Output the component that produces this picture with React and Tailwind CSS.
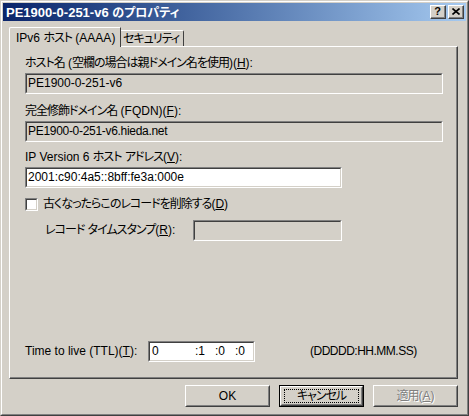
import React from 'react';

const FONT = "font-['Liberation_Sans','Noto_Sans_CJK_JP',sans-serif] [font-feature-settings:'palt']";

// Japanese runs are drawn a bit tighter, like MS UI Gothic
const J = ({ children }) => <span className="tracking-[-1px]">{children}</span>;

// sunken edit box, classic 3D look
const Field = ({ className = '', white = false, children }) => (
  <div className={`border border-t-[#808080] border-l-[#808080] border-r-white border-b-white ${className}`}>
    <div
      className={`h-full border border-t-[#404040] border-l-[#404040] border-r-[#d4d0c8] border-b-[#d4d0c8] pl-[1px] leading-[17px] whitespace-nowrap ${
        white ? 'bg-white' : 'bg-[#d4d0c8]'
      }`}
    >
      {children}
    </div>
  </div>
);

const U = ({ children }) => <span className="underline underline-offset-[1px]">{children}</span>;

const Button = ({ children, isDefault = false, disabled = false }) => (
  <div className={`w-[85px] h-[22px] ${isDefault ? 'border border-black' : ''}`}>
    <div className="h-full border border-t-white border-l-white border-r-[#404040] border-b-[#404040]">
      <div className="h-full border border-t-[#d4d0c8] border-l-[#d4d0c8] border-r-[#808080] border-b-[#808080] flex items-center justify-center">
        {isDefault ? (
          <div className="w-[75px] h-[14px] border border-dotted border-black flex items-center justify-center leading-none">
            {children}
          </div>
        ) : (
          <span className={disabled ? 'text-[#808080] [text-shadow:1px_1px_0_#fff]' : ''}>{children}</span>
        )}
      </div>
    </div>
  </div>
);

const TitleButton = ({ children }) => (
  <div className="w-[16px] h-[14px] bg-[#d4d0c8] border border-t-white border-l-white border-r-[#404040] border-b-[#404040]">
    <div className="h-full border-r border-b border-[#808080] flex items-center justify-center">{children}</div>
  </div>
);

export default function App() {
  return (
    <div className={`w-[469px] h-[416px] bg-[#d4d0c8] text-black text-[12px] ${FONT}`}>
      <div className="h-full border border-t-[#d4d0c8] border-l-[#d4d0c8] border-r-[#404040] border-b-[#404040]">
        <div className="h-full border border-t-white border-l-white border-r-[#808080] border-b-[#808080] p-px flex flex-col">
          {/* title bar */}
          <div className="h-[18px] bg-gradient-to-r from-[#0a246a] to-[#a6caf0] flex items-center pl-[3px] pr-[2px]">
            <span className="flex-1 text-white font-bold text-[13px] leading-none">
              PE1900-0-251-v6 <span className="text-[12px]">のプロパティ</span>
            </span>
            <div className="flex gap-[2px]">
              <TitleButton>
                <span className="font-bold text-[11px] leading-none">?</span>
              </TitleButton>
              <TitleButton>
                <svg width="8" height="7" viewBox="0 0 8 7">
                  <path d="M0.5 0.5 L7.5 6.5 M7.5 0.5 L0.5 6.5" stroke="black" strokeWidth="1.6" />
                </svg>
              </TitleButton>
            </div>
          </div>

          <div className="flex-1 pl-[6px] pr-[6px]">
            {/* tabs */}
            <div className="mt-[6px] h-[19px] flex items-end">
              <div className="relative z-10 -mb-px h-[20px] w-[112px] bg-[#d4d0c8] border-t border-l border-white rounded-tl-[2px] border-r border-r-[#404040] pl-[6px] pt-[3px] leading-[14px] whitespace-nowrap overflow-hidden">
                IPv6 <J>ホスト</J> (AAAA)
              </div>
              <div className="h-[16px] w-[63px] border-t border-white rounded-tr-[2px] border-r border-r-[#404040] pl-[2px] pt-[1px] leading-[14px] whitespace-nowrap">
                <J>セキュリティ</J>
              </div>
            </div>

            {/* tab panel */}
            <div className="w-[449px] h-[333px] border-t border-l border-white border-r border-b border-r-[#404040] border-b-[#404040]">
              <div className="h-full border-r border-b border-[#808080] pl-[15px] pt-[10px] flex flex-col leading-[13px]">
                <div>
                  <J>ホスト名</J> (<J>空欄の場合は親ドメイン名を使用</J>)(<U>H</U>):
                </div>
                <Field className="mt-[3px] w-[418px] h-[21px]">PE1900-0-251-v6</Field>

                <div className="mt-[11px]">
                  <J>完全修飾ドメイン名</J> (FQDN)(<U>F</U>):
                </div>
                <Field className="mt-[3px] w-[418px] h-[21px]">
                  <span className="tracking-[-0.3px]">PE1900-0-251-v6.hieda.net</span>
                </Field>

                <div className="mt-[9px]">
                  IP Version 6 <J>ホスト</J> <J>アドレス</J>(<U>V</U>):
                </div>
                <Field white className="mt-[3px] w-[317px] h-[21px]">
                  2001:c90:4a5::8bff:fe3a:000e
                </Field>

                <div className="mt-[10px] flex items-center h-[13px]">
                  <div className="w-[13px] h-[13px] border border-t-[#808080] border-l-[#808080] border-r-white border-b-white">
                    <div className="h-full bg-white border border-t-[#404040] border-l-[#404040] border-r-[#d4d0c8] border-b-[#d4d0c8]" />
                  </div>
                  <span className="ml-[5px]">
                    <J>古くなったらこのレコードを削除する</J>(<U>D</U>)
                  </span>
                </div>

                <div className="mt-[9px] flex items-center h-[21px]">
                  <span className="w-[168px] pl-[20px] whitespace-nowrap">
                    <J>レコード</J> <J>タイムスタンプ</J>(<U>R</U>):
                  </span>
                  <Field className="w-[149px] h-[21px]" />
                </div>

                <div className="mt-[100px] flex items-center h-[21px]">
                  <span className="w-[123px]">
                    Time to live (TTL)(<U>T</U>):
                  </span>
                  <Field white className="w-[107px] h-[21px]">
                    <div className="flex">
                      <span className="w-[44px] pl-px">0</span>
                      <span className="w-[20px]">:1</span>
                      <span className="w-[20px]">:0</span>
                      <span>:0</span>
                    </div>
                  </Field>
                  <span className="ml-[55px] tracking-[-0.5px]">(DDDDD:HH.MM.SS)</span>
                </div>
              </div>
            </div>

            {/* buttons */}
            <div className="mt-[6px] flex justify-end gap-[9px] pr-[2px]">
              <Button>OK</Button>
              <Button isDefault>
                <J>キャンセル</J>
              </Button>
              <Button disabled>
                <J>適用</J>(<U>A</U>)
              </Button>
            </div>
          </div>
        </div>
      </div>
    </div>
  );
}
